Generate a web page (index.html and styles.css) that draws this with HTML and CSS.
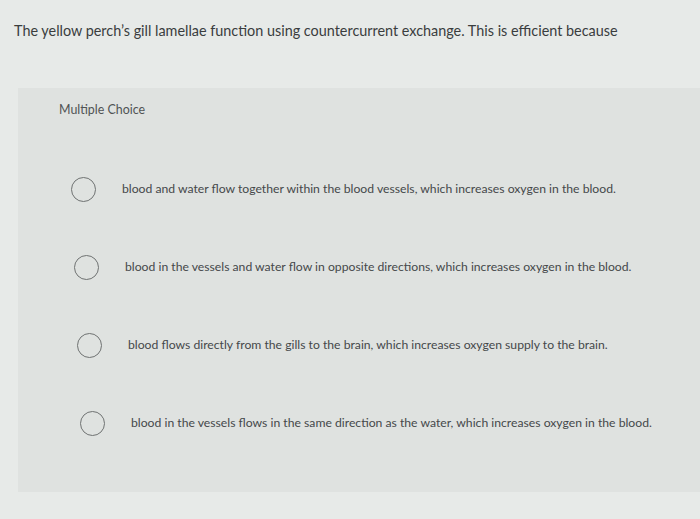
FILE: index.html
```html
<!DOCTYPE html>
<html>
<head>
<meta charset="utf-8">
<link rel="stylesheet" href="styles.css">
</head>
<body>
<div class="page">
  <p class="question">The yellow perch’s gill lamellae function using countercurrent exchange. This is efficient because</p>
  <section class="panel">
    <div class="label">Multiple Choice</div>
    <ul class="options">
      <li class="option"><span class="radio"></span><span class="text">blood and water flow together within the blood vessels, which increases oxygen in the blood.</span></li>
      <li class="option"><span class="radio"></span><span class="text">blood in the vessels and water flow in opposite directions, which increases oxygen in the blood.</span></li>
      <li class="option"><span class="radio"></span><span class="text">blood flows directly from the gills to the brain, which increases oxygen supply to the brain.</span></li>
      <li class="option"><span class="radio"></span><span class="text">blood in the vessels flows in the same direction as the water, which increases oxygen in the blood.</span></li>
    </ul>
  </section>
</div>
</body>
</html>
```

FILE: styles.css
```css
html, body {
  margin: 0;
  padding: 0;
  background: #e7eae8;
}
.page {
  width: 700px;
  height: 519px;
  overflow: hidden;
  font-family: Lato, "Open Sans", sans-serif;
  color: #3e4142;
}
.question {
  margin: 0;
  padding: 21px 0 0 14px;
  height: 88px;
  box-sizing: border-box;
  font-size: 14.4px;
  line-height: 20px;
  color: #3a3d3e;
}
.panel {
  margin-left: 18px;
  background: #dfe2e0;
  height: 404px;
  padding: 14px 0 0 41px;
  box-sizing: border-box;
}
.label {
  font-size: 12.4px;
  line-height: 16px;
  color: #505354;
}
.options {
  list-style: none;
  margin: 32px 0 0 0;
  padding: 0;
}
.option {
  display: flex;
  align-items: center;
  height: 78px;
}
.option:nth-child(2) { padding-left: 3px; }
.option:nth-child(3) { padding-left: 6px; }
.option:nth-child(4) { padding-left: 9px; }
.radio {
  width: 23px;
  height: 23px;
  border: 1.5px solid #6f7272;
  border-radius: 50%;
  flex: none;
  margin-left: 12px;
}
.text {
  margin-left: 26px;
  font-size: 12.2px;
  line-height: 16px;
  color: #45484a;
  white-space: nowrap;
}
```
